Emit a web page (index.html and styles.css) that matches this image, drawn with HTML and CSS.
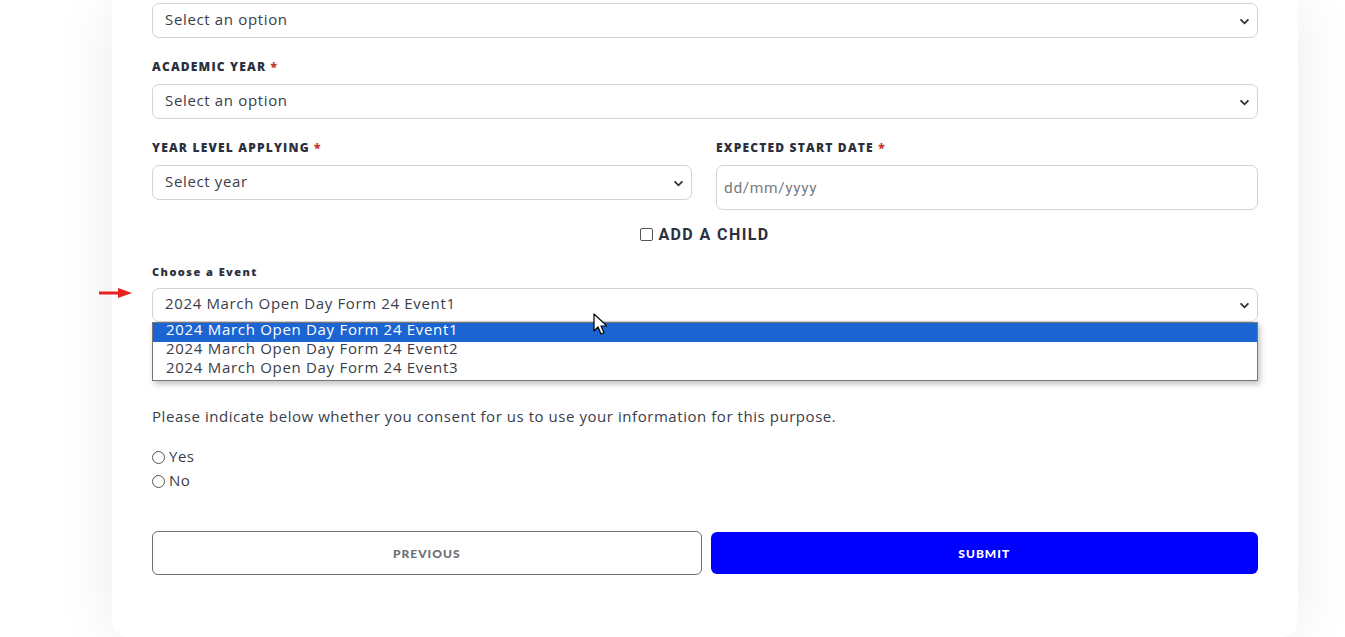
FILE: index.html
```html
<!DOCTYPE html>
<html lang="en">
<head>
<meta charset="utf-8">
<title>Enquiry form</title>
<link rel="stylesheet" href="styles.css">
</head>
<body>
<div class="page">
  <form class="card">
    <div class="select-box"><span class="select-text">Select an option</span><svg class="chev" viewBox="0 0 12 8" width="11" height="7"><path d="M1.5 1.5 6 6l4.5-4.5" fill="none" stroke="#2b2f3a" stroke-width="2"/></svg></div>

    <div class="field">
      <label class="label">ACADEMIC YEAR <span class="req">*</span></label>
      <div class="select-box"><span class="select-text">Select an option</span><svg class="chev" viewBox="0 0 12 8" width="11" height="7"><path d="M1.5 1.5 6 6l4.5-4.5" fill="none" stroke="#2b2f3a" stroke-width="2"/></svg></div>
    </div>

    <div class="row">
      <div class="field">
        <label class="label">YEAR LEVEL APPLYING <span class="req">*</span></label>
        <div class="select-box"><span class="select-text">Select year</span><svg class="chev" viewBox="0 0 12 8" width="11" height="7"><path d="M1.5 1.5 6 6l4.5-4.5" fill="none" stroke="#2b2f3a" stroke-width="2"/></svg></div>
      </div>
      <div class="field">
        <label class="label">EXPECTED START DATE <span class="req">*</span></label>
        <div class="date-box"><span class="placeholder">dd/mm/yyyy</span></div>
      </div>
    </div>

    <div class="child-row">
      <span class="checkbox"></span><span class="child-text">ADD A CHILD</span>
    </div>

    <div class="event-field">
      <label class="label small">Choose a Event</label>
      <div class="event-wrap">
        <svg class="arrow" viewBox="0 0 34 12" width="34" height="12"><path d="M0 6h22" stroke="#e8231f" stroke-width="3"/><path d="M19 1 33 6 19 11z" fill="#e8231f"/></svg>
        <div class="select-box event"><span class="select-text">2024 March Open Day Form 24 Event1</span><svg class="chev" viewBox="0 0 12 8" width="11" height="7"><path d="M1.5 1.5 6 6l4.5-4.5" fill="none" stroke="#2b2f3a" stroke-width="2"/></svg></div>
        <ul class="dropdown">
          <li class="opt active">2024 March Open Day Form 24 Event1</li>
          <li class="opt">2024 March Open Day Form 24 Event2</li>
          <li class="opt">2024 March Open Day Form 24 Event3</li>
        </ul>
        <svg class="cursor" viewBox="0 0 14 22" width="14" height="22"><path d="M1 1v17l4-4 3 7 3-1.3-3-6.7h6z" fill="#fff" stroke="#000" stroke-width="1.2" stroke-linejoin="round"/></svg>
      </div>
    </div>

    <p class="consent">Please indicate below whether you consent for us to use your information for this purpose.</p>

    <div class="radios">
      <div class="radio-row"><span class="radio"></span><span>Yes</span></div>
      <div class="radio-row"><span class="radio"></span><span>No</span></div>
    </div>

    <div class="buttons">
      <button type="button" class="btn prev">PREVIOUS</button>
      <button type="button" class="btn submit">SUBMIT</button>
    </div>
  </form>
</div>
</body>
</html>
```

FILE: styles.css
```css
* { box-sizing: border-box; }
html, body { margin: 0; padding: 0; }
body {
  background: #ffffff;
  font-family: "Open Sans", Lato, sans-serif;
  color: #3a3d4a;
  overflow: hidden;
  height: 637px;
}
.page {
  padding-left: 112px;
  width: 1345px;
}
.card {
  width: 1186px;
  height: 637px;
  background: #fff;
  border-radius: 0 0 16px 16px;
  box-shadow: 0 0 60px rgba(20, 30, 60, 0.08);
  padding: 3px 40px 0 40px;
}
.select-box {
  position: relative;
  display: flex;
  align-items: center;
  height: 35px;
  width: 100%;
  border: 1px solid #d3d3d6;
  border-radius: 7px;
  padding: 0 12px 4px;
  background: #fff;
}
.select-text {
  font-size: 15px;
  line-height: 20px;
  color: #3a3d4a;
  letter-spacing: 0.65px;
}
.chev {
  position: absolute;
  right: 7px;
  top: 14px;
}
.field { margin-top: 20px; }
.label {
  display: block;
  height: 16px;
  line-height: 16px;
  padding-top: 1px;
  font-size: 12px;
  font-weight: 800;
  letter-spacing: 1.2px;
  color: #2b2f3e;
  margin-bottom: 10px;
}
.req { color: #c0392b; }
.row {
  display: grid;
  grid-template-columns: 540px 1fr;
  column-gap: 24px;
}
.date-box {
  height: 45px;
  border: 1px solid #d3d3d6;
  border-radius: 7px;
  display: flex;
  align-items: center;
  padding: 0 7px;
}
.placeholder {
  font-family: Roboto, "Liberation Sans", sans-serif;
  font-size: 15.5px;
  letter-spacing: 0.65px;
  color: #7a7c82;
}
.child-row {
  margin-top: 15px;
  height: 18px;
  display: flex;
  align-items: center;
  justify-content: center;
  gap: 5px;
}
.checkbox {
  width: 13px;
  height: 13px;
  border: 1px solid #555;
  border-radius: 2px;
  background: #fff;
}
.child-text {
  font-family: Roboto, "Liberation Sans", sans-serif;
  font-weight: 700;
  font-size: 16px;
  letter-spacing: 1.4px;
  color: #2b2f3e;
}
.event-field { margin-top: 21px; }
.label.small {
  font-size: 11px;
  letter-spacing: 1.45px;
  margin-bottom: 8px;
  padding-top: 0;
}
.event-wrap { position: relative; }
.select-box.event { height: 34px; }
.select-box.event .chev { top: 13px; }
.arrow {
  position: absolute;
  left: -53px;
  top: -1px;
}
.dropdown {
  position: absolute;
  left: 0;
  right: 0;
  top: 34px;
  margin: 0;
  padding: 0;
  list-style: none;
  background: #fff;
  border: 1px solid #767676;
  box-shadow: 2px 3px 6px rgba(0, 0, 0, 0.25);
  z-index: 5;
}
.opt {
  height: 19px;
  line-height: 12px;
  font-size: 15px;
  padding-left: 13px;
  color: #3a3d4a;
  letter-spacing: 0.7px;
}
.opt.active {
  background: #1b64d1;
  color: #fff;
}
.cursor {
  position: absolute;
  left: 441px;
  top: 25px;
  z-index: 6;
}
.consent {
  margin: 82px 0 0;
  font-size: 15px;
  line-height: 24px;
  color: #3a3d4a;
  letter-spacing: 0.55px;
}
.radios { margin-top: 16px; }
.radio-row {
  display: flex;
  align-items: center;
  gap: 4px;
  height: 24px;
  font-size: 15px;
  color: #3a3d4a;
  letter-spacing: 0.5px;
}
.radio {
  width: 13px;
  height: 13px;
  border: 1px solid #555;
  border-radius: 50%;
  margin-top: 2px;
}
.buttons {
  margin-top: 39px;
  display: flex;
  gap: 9px;
}
.btn {
  flex: 1;
  height: 44px;
  border-radius: 6px;
  font-family: Lato, sans-serif;
  font-weight: 900;
  font-size: 12px;
  letter-spacing: 1px;
}
.btn.prev {
  background: #fff;
  border: 1px solid #6d7076;
  color: #6d7076;
}
.btn.submit {
  background: #0000ff;
  border: none;
  color: #fff;
  height: 42px;
  margin-top: 1px;
}
```
